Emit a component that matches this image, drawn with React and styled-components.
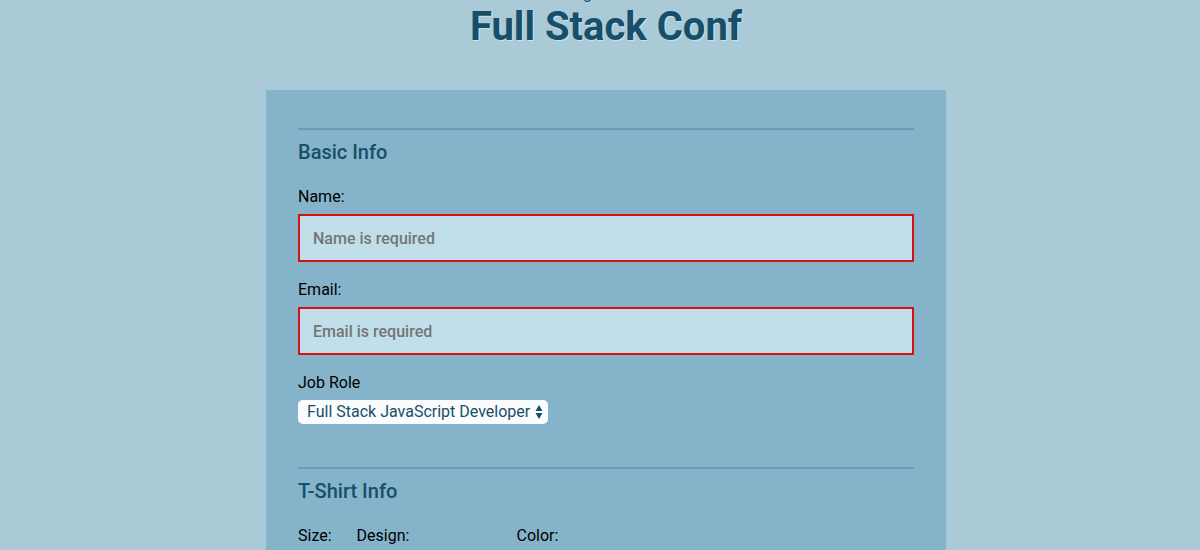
import React from "react";
import styled, { createGlobalStyle } from "styled-components";

const GlobalStyle = createGlobalStyle`
  *, *::before, *::after { box-sizing: border-box; }
  body {
    margin: 0;
    background: #abcad7;
    color: #000;
    font-family: Roboto, "Liberation Sans", sans-serif;
    font-size: 16px;
    line-height: 20px;
  }
`;

const Page = styled.div`
  display: flex;
  flex-direction: column;
  align-items: center;
  padding-left: 12px;
`;

const Header = styled.header`
  margin-top: -16px;
  margin-bottom: 40px;
  text-align: center;
  color: #184f68;
`;

const Tagline = styled.p`
  margin: 0;
`;

const Title = styled.h1`
  margin: 0;
  font-size: 40px;
  font-weight: 700;
  line-height: 46px;
  text-shadow: 1px 1px 0 #c8e2ee;
`;

const Form = styled.form`
  width: 100%;
  max-width: 680px;
  padding: 38px 32px 0;
  background: #85b3ca;
`;

const Fieldset = styled.section`
  padding-top: 10px;
  margin-bottom: 43px;
  border-top: 2px solid #6a9db5;
`;

const Legend = styled.h2`
  margin: 0 0 23px;
  font-size: 20px;
  font-weight: 500;
  line-height: 24px;
  color: #184f68;
`;

const Label = styled.label`
  display: block;
  margin-bottom: 7px;
`;

const TextInput = styled.input`
  display: block;
  width: 100%;
  height: 48px;
  margin-bottom: 18px;
  padding: 0 13px;
  border: 2px solid #d8100f;
  border-radius: 0;
  background: #c1dfea;
  color: #184f68;
  font: 500 16px/20px Roboto, "Liberation Sans", sans-serif;
  outline: none;

  &::placeholder {
    color: #757575;
    opacity: 1;
  }
`;

const SelectBox = styled.div`
  position: relative;
  width: ${({ $width }) => $width};
`;

const Select = styled.select`
  display: block;
  appearance: none;
  width: 100%;
  height: 24px;
  padding: 0 9px;
  border: 0;
  border-radius: 5px;
  background: #fafcfd;
  color: #184f68;
  font: 400 16px/20px Roboto, "Liberation Sans", sans-serif;
`;

const Arrows = styled.svg`
  position: absolute;
  top: 4px;
  right: 5px;
  width: 8px;
  height: 16px;
  fill: #184f68;
  pointer-events: none;
`;

const Columns = styled.div`
  display: flex;
  gap: 25px;
`;

function Dropdown({ id, width, children }) {
  return (
    <SelectBox $width={width}>
      <Select id={id}>{children}</Select>
      <Arrows viewBox="0 0 8 16" aria-hidden="true">
        <path d="M4 1 7.5 7H.5ZM4 15 .5 9h7Z" />
      </Arrows>
    </SelectBox>
  );
}

export default function App() {
  return (
    <>
      <GlobalStyle />
      <Page>
        <Header>
          <Tagline>Register for</Tagline>
          <Title>Full Stack Conf</Title>
        </Header>
        <Form noValidate>
          <Fieldset>
            <Legend>Basic Info</Legend>
            <Label htmlFor="name">Name:</Label>
            <TextInput id="name" type="text" placeholder="Name is required" />
            <Label htmlFor="email">Email:</Label>
            <TextInput id="email" type="email" placeholder="Email is required" />
            <Label htmlFor="role">Job Role</Label>
            <Dropdown id="role" width="250px">
              <option>Full Stack JavaScript Developer</option>
            </Dropdown>
          </Fieldset>
          <Fieldset>
            <Legend>T-Shirt Info</Legend>
            <Columns>
              <div>
                <Label htmlFor="size">Size:</Label>
                <Dropdown id="size" width="100%" />
              </div>
              <div>
                <Label htmlFor="design">Design:</Label>
                <Dropdown id="design" width="135px" />
              </div>
              <div>
                <Label htmlFor="color">Color:</Label>
                <Dropdown id="color" width="135px" />
              </div>
            </Columns>
          </Fieldset>
        </Form>
      </Page>
    </>
  );
}
